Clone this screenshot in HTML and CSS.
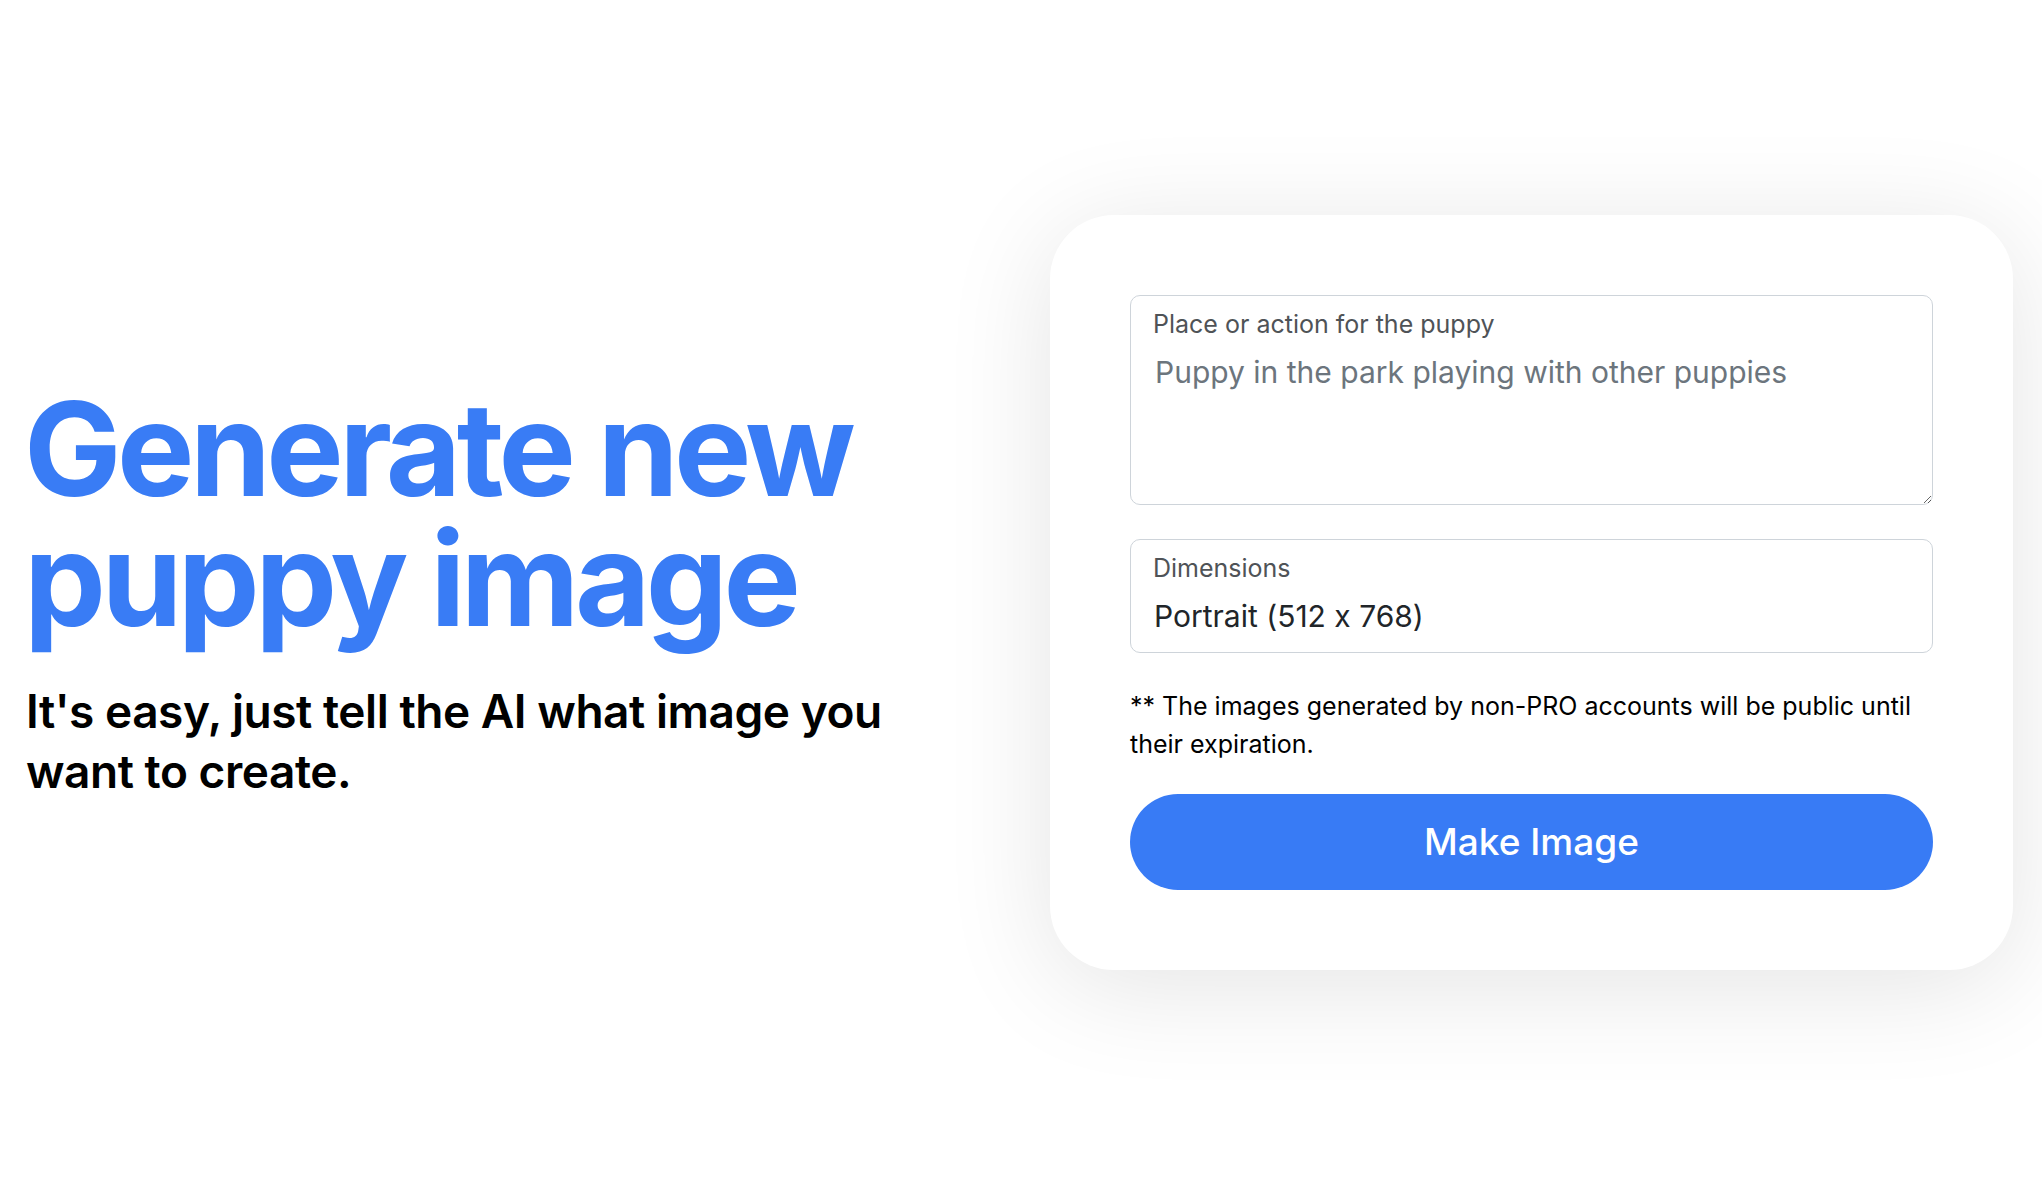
FILE: index.html
```html
<!DOCTYPE html>
<html lang="en">
<head>
    <meta charset="UTF-8">
    <meta name="viewport" content="width=device-width, initial-scale=1.0">
    <title>Puppy Image Generator</title>
    <link rel="stylesheet" href="styles.css">
</head>
<body>
    <main class="page">
        <section class="intro">
            <h1 class="title">Generate new puppy image</h1>
            <p class="lead">It's easy, just tell the AI what image you want to create.</p>
        </section>

        <form class="card" onsubmit="return false">
            <div class="field field-text">
                <label class="field-label" for="prompt">Place or action for the puppy</label>
                <textarea id="prompt" class="field-input" placeholder="Puppy in the park playing with other puppies"></textarea>
            </div>

            <div class="field field-select">
                <label class="field-label" for="size">Dimensions</label>
                <select id="size" class="field-input">
                    <option>Portrait (512 x 768)</option>
                    <option>Square (512 x 512)</option>
                    <option>Landscape (768 x 512)</option>
                </select>
            </div>

            <p class="note">** The images generated by non-PRO accounts will be public until their expiration.</p>

            <button class="make-btn" type="submit">Make Image</button>
        </form>
    </main>
</body>
</html>
```

FILE: styles.css
```css
body {
    margin: 0;
    background-color: #ffffff;
    font-family: Inter, "Noto Sans", Arial, sans-serif;
    font-feature-settings: "calt" 0; /* keep "512 x 768" as a plain x */
    color: #000;
}

.page {
    box-sizing: border-box;
    min-height: 100vh;
    display: grid;
    grid-template-columns: 1fr 963px;
    align-items: center;
    padding: 0 29px 12px 24px;
}

.intro {
    max-width: 900px;
}

.title {
    margin: 0 0 37px;
    font-size: 130px;
    line-height: 1;
    font-weight: 700;
    letter-spacing: -0.035em;
    color: #397cf5; /* bright blue heading */
}

.lead {
    margin: 0 0 0 2px;
    font-size: 46px;
    line-height: 60px;
    font-weight: 600;
    letter-spacing: -0.01em;
}

.card {
    background-color: #fff;
    border-radius: 64px;
    padding: 80px;
    box-shadow: 0 16px 110px rgba(0, 0, 0, 0.11);
}

.field {
    box-sizing: border-box;
    display: flex;
    flex-direction: column;
    border: 1px solid #ced4da;
    border-radius: 10px;
    padding: 13px 0 0 22px;
}

.field-label {
    font-size: 25px;
    line-height: 30px;
    color: #4f5357; /* muted label grey */
}

.field-input {
    margin-top: 15px;
    padding: 0 0 0 2px;
    border: none;
    outline: none;
    background: transparent;
    font-family: inherit;
    font-feature-settings: "calt" 0;
    font-size: 30px;
    line-height: 36px;
    color: #212529;
}

.field-text {
    height: 210px;
}

.field-text .field-input {
    flex: 1;
    resize: vertical;
}

.field-text .field-input::placeholder {
    color: #6c757d;
}

.field-select {
    margin-top: 34px;
    padding-bottom: 18px;
}

.field-select .field-input {
    -webkit-appearance: none;
    appearance: none;
    height: 36px;
    padding-left: 1px;
}

.note {
    margin: 34px 0 31px;
    font-size: 25px;
    line-height: 38px;
}

.make-btn {
    display: block;
    width: 100%;
    height: 96px;
    border: none;
    border-radius: 48px;
    background-color: #387bf5; /* same blue as the heading */
    color: #fff;
    font-family: inherit;
    font-size: 37px;
    font-weight: 500;
    cursor: pointer;
}

.make-btn:hover {
    background-color: #2f6fe6;
}
```
